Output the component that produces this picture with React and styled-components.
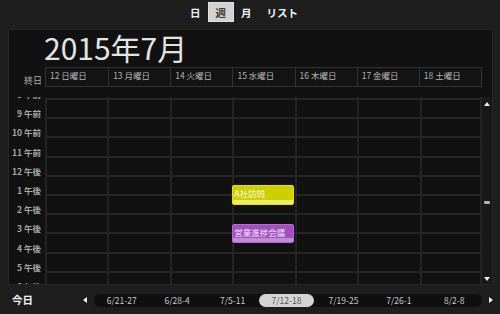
import React from "react";
import styled, { createGlobalStyle } from "styled-components";

const ROW_H = 19.2;
const FIRST_HOUR = 8;

const GlobalStyle = createGlobalStyle`
  html, body {
    margin: 0;
    padding: 0;
    background: #1e1e1e;
  }
  body {
    font-family: "Noto Sans CJK JP", "Noto Sans", sans-serif;
    color: #e6e6e6;
  }
  #root {
    width: 500px;
    height: 314px;
    overflow: hidden;
  }
`;

const Screen = styled.div`
  width: 500px;
  height: 314px;
  display: flex;
  flex-direction: column;
  background: #1e1e1e;
`;

const TopBar = styled.div`
  height: 29px;
  display: flex;
  align-items: flex-start;
  justify-content: center;
  gap: 0;
  padding: 2px 12px 0 0;
  box-sizing: border-box;
`;

const Tab = styled.div`
  height: 20px;
  padding: 0 6.5px;
  display: flex;
  align-items: center;
  font-size: 10.5px;
  font-weight: 700;
  color: ${(p) => (p.$active ? "#3a3a3a" : "#f0f0f0")};
  background: ${(p) => (p.$active ? "#d2d2d2" : "transparent")};
  border: 1px solid ${(p) => (p.$active ? "#e0e0e0" : "transparent")};
  box-sizing: border-box;
`;

const Panel = styled.div`
  margin: 0 7px 0 8px;
  height: 256px;
  box-sizing: border-box;
  background: #111111;
  border: 1px solid #262626;
  display: flex;
  flex-direction: column;
`;

const Title = styled.div`
  height: 37px;
  padding-left: 35px;
  font-size: 30px;
  line-height: 34px;
  color: #e4e4e4;
  font-weight: 400;
`;

const HeaderRow = styled.div`
  height: 20px;
  display: grid;
  grid-template-columns: 36px 437px 10px;
  margin-bottom: 10px;
`;

const AllDay = styled.div`
  display: flex;
  align-items: flex-end;
  justify-content: flex-end;
  padding: 0 3px 2px 0;
  font-size: 9px;
  color: #b0b0b0;
  line-height: 1;
`;

const DayHeads = styled.div`
  display: grid;
  grid-template-columns: repeat(7, 1fr);
  border: 1px solid #333333;
  background: #131313;
`;

const DayHead = styled.div`
  border-left: ${(p) => (p.$first ? "none" : "1px solid #333333")};
  font-size: 8.5px;
  color: #b4b4b4;
  padding: 2px 0 0 4px;
  line-height: 1.2;
  white-space: nowrap;
`;

const Body = styled.div`
  flex: 1;
  display: flex;
  min-height: 0;
`;

const Viewport = styled.div`
  width: 473px;
  overflow: hidden;
  position: relative;
`;

const Canvas = styled.div`
  position: relative;
  margin-top: -16.2px;
`;

const HourRow = styled.div`
  height: ${ROW_H}px;
  display: grid;
  grid-template-columns: 36px repeat(7, 1fr);
`;

const HourLabel = styled.div`
  display: flex;
  align-items: flex-end;
  justify-content: flex-end;
  padding: 0 4px 1.5px 0;
  font-size: 8.5px;
  font-weight: 700;
  color: #a8a8a8;
  line-height: 1;
  white-space: nowrap;
`;

const Cell = styled.div`
  border-left: 2px solid #232323;
  border-bottom: 2px solid #262626;
  ${(p) => p.$last && "border-right: 2px solid #232323;"}
  box-sizing: border-box;
`;

const EventLayer = styled.div`
  position: absolute;
  top: 0;
  left: 36px;
  right: 0;
  bottom: 0;
`;

const tones = {
  yellow: { bg: "#cfcf00", edge: "#e4e400", stripe: "#ecec6a", text: "#f7f7e0" },
  purple: { bg: "#a150c2", edge: "#b46ad2", stripe: "#c48adb", text: "#f0e6f4" },
};

const Event = styled.div`
  position: absolute;
  box-sizing: border-box;
  width: calc(100% / 7 - 1px);
  background: ${(p) => tones[p.$tone].bg};
  border: 1px solid ${(p) => tones[p.$tone].edge};
  border-radius: 2px;
  box-shadow: inset 0 -4px 0 ${(p) => tones[p.$tone].stripe};
  color: ${(p) => tones[p.$tone].text};
  font-size: 8.5px;
  line-height: 1;
  padding: 3px 0 0 1px;
  white-space: nowrap;
  overflow: hidden;
`;

const ScrollBar = styled.div`
  width: 10px;
  background: #181818;
  position: relative;
  display: flex;
  flex-direction: column;
  align-items: center;
  justify-content: space-between;
  padding: 4px 0 2px;
  box-sizing: border-box;
`;

const Thumb = styled.div`
  position: absolute;
  top: 104px;
  left: 2px;
  width: 6px;
  height: 3px;
  border-radius: 1px;
  background: #b0b0b0;
`;

const BottomBar = styled.div`
  flex: 1;
  display: flex;
  align-items: center;
`;

const Today = styled.div`
  width: 79px;
  box-sizing: border-box;
  padding-left: 12px;
  font-size: 10.5px;
  font-weight: 700;
  line-height: 14px;
  color: #f2f2f2;
`;

const ArrowBtn = styled.div`
  width: ${(p) => p.$w}px;
  display: flex;
  justify-content: center;
  align-items: center;
`;

const Strip = styled.div`
  width: 388px;
  height: 13px;
  margin: 1px 0 0 3px;
  border-radius: 6px;
  background: #0f0f0f;
  display: grid;
  grid-template-columns: repeat(7, 1fr);
`;

const WeekItem = styled.div`
  display: flex;
  align-items: center;
  justify-content: center;
  font-size: 8.5px;
  border-radius: 7px;
  color: ${(p) => (p.$active ? "#555555" : "#c8c8c8")};
  background: ${(p) => (p.$active ? "#d4d4d4" : "transparent")};
  margin: ${(p) => (p.$active ? "0 2px 0 -1px" : "0")};
`;

const Arrow = ({ dir }) => {
  const pts = {
    up: "0,5 3,1 6,5",
    down: "0,1 3,5 6,1",
    left: "5,0 1,3 5,6",
    right: "1,0 5,3 1,6",
  }[dir];
  return (
    <svg width="6" height="6" viewBox="0 0 6 6">
      <polygon points={pts} fill="#f0f0f0" />
    </svg>
  );
};

const days = ["12 日曜日", "13 月曜日", "14 火曜日", "15 水曜日", "16 木曜日", "17 金曜日", "18 土曜日"];
const weeks = ["6/21-27", "6/28-4", "7/5-11", "7/12-18", "7/19-25", "7/26-1", "8/2-8"];

const hours = [];
for (let h = FIRST_HOUR; h <= 20; h++) hours.push(h);

const hourLabel = (h) => {
  if (h < 12) return `${h} 午前`;
  if (h === 12) return "12 午後";
  return `${h - 12} 午後`;
};

const events = [
  { title: "A社訪問", day: 3, start: 13.45, end: 14.45, tone: "yellow" },
  { title: "営業進捗会議", day: 3, start: 15.45, end: 16.45, tone: "purple" },
];

export default function App() {
  return (
    <Screen>
      <GlobalStyle />
      <TopBar>
        <Tab>日</Tab>
        <Tab $active>週</Tab>
        <Tab>月</Tab>
        <Tab>リスト</Tab>
      </TopBar>
      <Panel>
        <Title>2015年7月</Title>
        <HeaderRow>
          <AllDay>終日</AllDay>
          <DayHeads>
            {days.map((d, i) => (
              <DayHead key={d} $first={i === 0}>
                {d}
              </DayHead>
            ))}
          </DayHeads>
        </HeaderRow>
        <Body>
          <Viewport>
            <Canvas>
              {hours.map((h) => (
                <HourRow key={h}>
                  <HourLabel>{hourLabel(h)}</HourLabel>
                  {days.map((d, i) => (
                    <Cell key={d} $last={i === 6} />
                  ))}
                </HourRow>
              ))}
              <EventLayer>
                {events.map((ev) => (
                  <Event
                    key={ev.title}
                    $tone={ev.tone}
                    style={{
                      left: `calc(${ev.day} * 100% / 7)`,
                      top: (ev.start - FIRST_HOUR) * ROW_H,
                      height: (ev.end - ev.start) * ROW_H,
                    }}
                  >
                    {ev.title}
                  </Event>
                ))}
              </EventLayer>
            </Canvas>
          </Viewport>
          <ScrollBar>
            <Arrow dir="up" />
            <Thumb />
            <Arrow dir="down" />
          </ScrollBar>
        </Body>
      </Panel>
      <BottomBar>
        <Today>今日</Today>
        <ArrowBtn $w={12}>
          <Arrow dir="left" />
        </ArrowBtn>
        <Strip>
          {weeks.map((w, i) => (
            <WeekItem key={w} $active={i === 3}>
              {w}
            </WeekItem>
          ))}
        </Strip>
        <ArrowBtn $w={18}>
          <Arrow dir="right" />
        </ArrowBtn>
      </BottomBar>
    </Screen>
  );
}
